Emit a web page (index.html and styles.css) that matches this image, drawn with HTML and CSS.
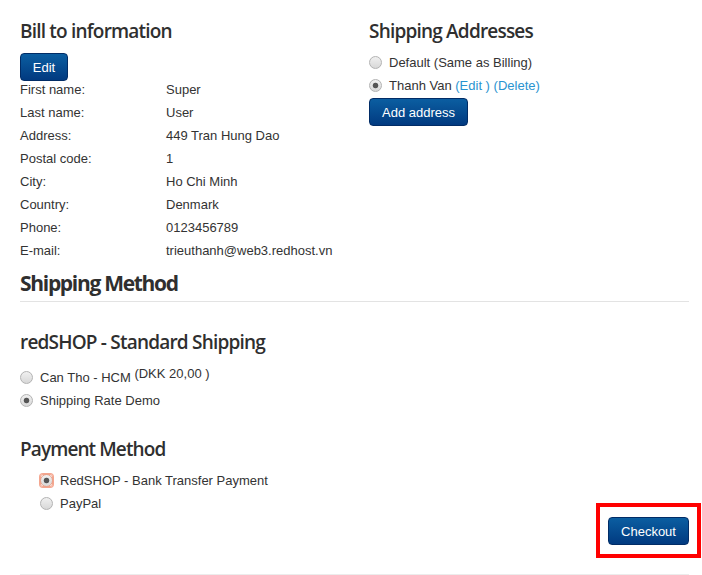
FILE: index.html
```html
<!DOCTYPE html>
<html>
<head>
<meta charset="utf-8">
<link rel="stylesheet" href="styles.css">
</head>
<body>
<div class="page">
  <div class="cols">
    <section class="col">
      <h2 class="title">Bill to information</h2>
      <button class="btn btn-edit">Edit</button>
      <div class="info">
        <div class="info-row"><span class="lbl">First name:</span><span>Super</span></div>
        <div class="info-row"><span class="lbl">Last name:</span><span>User</span></div>
        <div class="info-row"><span class="lbl">Address:</span><span>449 Tran Hung Dao</span></div>
        <div class="info-row"><span class="lbl">Postal code:</span><span>1</span></div>
        <div class="info-row"><span class="lbl">City:</span><span>Ho Chi Minh</span></div>
        <div class="info-row"><span class="lbl">Country:</span><span>Denmark</span></div>
        <div class="info-row"><span class="lbl">Phone:</span><span>0123456789</span></div>
        <div class="info-row"><span class="lbl">E-mail:</span><span>trieuthanh@web3.redhost.vn</span></div>
      </div>
    </section>
    <section class="col">
      <h2 class="title">Shipping Addresses</h2>
      <div class="addr-list">
        <label class="opt"><input type="radio" name="addr"><span>Default (Same as Billing)</span></label>
        <label class="opt"><input type="radio" name="addr" checked><span>Thanh Van <a href="#">(Edit )</a> <a href="#">(Delete)</a></span></label>
      </div>
      <button class="btn btn-add">Add address</button>
    </section>
  </div>

  <h2 class="section-title">Shipping Method</h2>
  <h3 class="title sub">redSHOP - Standard Shipping</h3>
  <div class="ship-list">
    <label class="opt"><input type="radio" name="ship"><span>Can Tho - HCM <span class="price">(DKK 20,00 )</span></span></label>
    <label class="opt"><input type="radio" name="ship" checked><span>Shipping Rate Demo</span></label>
  </div>

  <h3 class="title pay-title">Payment Method</h3>
  <div class="pay-list">
    <label class="opt"><span class="focus"><input type="radio" name="pay" checked></span><span>RedSHOP - Bank Transfer Payment</span></label>
    <label class="opt"><input type="radio" name="pay"><span>PayPal</span></label>
  </div>

  <div class="checkout-row">
    <button class="btn btn-checkout">Checkout</button>
  </div>
  <div class="footer-line"></div>
</div>
</body>
</html>
```

FILE: styles.css
```css
html, body {
  margin: 0;
  padding: 0;
  background: #fff;
}
body {
  font-family: "Liberation Sans", Arial, sans-serif;
  font-size: 13px;
  color: #333;
}
.page {
  width: 669px;
  margin-left: 20px;
  padding-top: 19px;
}
.cols {
  display: grid;
  grid-template-columns: 349px 1fr;
}
.title {
  font-family: "Open Sans", sans-serif;
  font-weight: 600;
  font-size: 19px;
  line-height: 24px;
  margin: 0;
  color: #2f2f2f;
  letter-spacing: -0.8px;
}
.btn {
  display: block;
  font-family: "Liberation Sans", Arial, sans-serif;
  font-size: 13px;
  color: #fff;
  height: 28px;
  padding: 0 12px;
  border: 1px solid #012c66;
  border-radius: 4px;
  background: linear-gradient(#0b5ea1, #013a80);
  cursor: pointer;
}
.btn-edit {
  margin-top: 10px;
  width: 48px;
  padding: 0;
}
.info {
  margin-top: -3px;
}
.info-row {
  display: flex;
  height: 23px;
  line-height: 23px;
}
.lbl {
  width: 146px;
  flex: none;
}
.addr-list {
  margin-top: 8px;
}
.opt {
  display: flex;
  align-items: center;
  gap: 7px;
  height: 23px;
  line-height: 23px;
}
.opt a {
  color: #2a93d0;
  text-decoration: none;
}
input[type=radio] {
  appearance: none;
  -webkit-appearance: none;
  width: 13px;
  height: 13px;
  margin: 0;
  flex: none;
  border: 1px solid #b3b3b3;
  border-radius: 50%;
  background: linear-gradient(#f0f0f0, #d8d8d8);
}
input[type=radio]:checked {
  background:
    radial-gradient(circle, #555 0 2.4px, rgba(85,85,85,0) 3.2px),
    linear-gradient(#f0f0f0, #d8d8d8);
}
.btn-add {
  margin-top: 1px;
  width: 99px;
  padding: 0;
}
.section-title {
  font-family: "Open Sans", sans-serif;
  font-weight: 700;
  font-size: 21px;
  line-height: 26px;
  margin: 8px 0 0;
  padding-bottom: 5px;
  border-bottom: 1px solid #e3e3e3;
  color: #2f2f2f;
  letter-spacing: -1.3px;
}
.sub {
  margin-top: 28px;
}
.ship-list {
  margin-top: 12px;
}
.price {
  vertical-align: 4px;
  line-height: 1;
}
.pay-title {
  margin-top: 25px;
  letter-spacing: -0.9px;
}
.pay-list {
  margin-top: 8px;
  padding-left: 20px;
}
.focus {
  display: flex;
  border-radius: 3px;
  box-shadow: 0 0 0 1px #f4a68f, inset 0 0 0 1px #f4a68f;
}
.focus input[type=radio] {
  border-color: #e8a28c;
}
.checkout-row {
  display: flex;
  justify-content: flex-end;
  margin-top: 2px;
}
.btn-checkout {
  position: relative;
  width: 81px;
  padding: 0;
}
.btn-checkout::after {
  content: "";
  position: absolute;
  top: -15px;
  bottom: -14px;
  left: -13px;
  right: -13px;
  border: 4px solid #ff0000;
  pointer-events: none;
}
.footer-line {
  margin-top: 29px;
  border-top: 1px solid #ececec;
}
```
